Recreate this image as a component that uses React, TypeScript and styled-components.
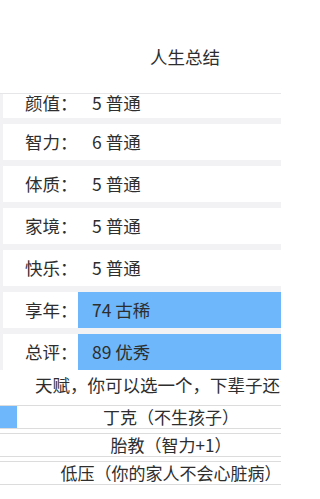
import React from "react";
import styled, { createGlobalStyle } from "styled-components";

const Global = createGlobalStyle`
  html, body {
    margin: 0;
    padding: 0;
    background: #ffffff;
    overflow: hidden;
  }
  body {
    font-family: "Noto Sans CJK SC", "Noto Sans", sans-serif;
    color: #2e2e2e;
  }
`;

const Viewport = styled.div`
  width: 281px;
  height: 499px;
  overflow: hidden;
`;

const Page = styled.div`
  width: 370px;
  display: flex;
  flex-direction: column;
`;

const Header = styled.div`
  height: 93px;
  display: flex;
  align-items: flex-start;
  justify-content: center;
  padding-top: 46px;
  box-sizing: border-box;
  font-size: 17.5px;
  line-height: 22px;
`;

const Stats = styled.div`
  display: flex;
  flex-direction: column;
  gap: 6px;
  padding: 0 0 0 3px;
  background: #f2f2f4;
  border-top: 1px solid #e6e6e8;
`;

const Row = styled.div<{ $clipped?: boolean }>`
  height: ${(p) => (p.$clipped ? "24px" : "36px")};
  display: grid;
  grid-template-columns: 75px 1fr;
  align-items: ${(p) => (p.$clipped ? "start" : "stretch")};
  background: #ffffff;
  font-size: 17.5px;
  line-height: 18px;
`;

const Label = styled.div`
  padding-left: 22px;
  display: flex;
  align-items: center;
`;

const Value = styled.div<{ $hi?: boolean }>`
  padding-left: 14px;
  display: flex;
  align-items: center;
  background: ${(p) => (p.$hi ? "#6db7fa" : "transparent")};
`;

const Prompt = styled.div`
  padding: 4px 0 0 35px;
  height: 35px;
  box-sizing: border-box;
  font-size: 17.5px;
  line-height: 22px;
  white-space: nowrap;
`;

const Choices = styled.div`
  width: 342px;
  display: flex;
  flex-direction: column;
  gap: 4px;
`;

const Choice = styled.div`
  height: 24px;
  box-sizing: border-box;
  border-top: 1px solid #dcdcdc;
  border-bottom: 1px solid #dcdcdc;
  display: grid;
  grid-template-columns: 17px 1fr 17px;
  font-size: 17px;
  line-height: 22px;
  white-space: nowrap;
`;

const Mark = styled.div<{ $on?: boolean }>`
  background: ${(p) => (p.$on ? "#6db7fa" : "transparent")};
`;

const ChoiceText = styled.div`
  text-align: center;
`;

const stats = [
  { label: "颜值：", value: "5 普通", clipped: true },
  { label: "智力：", value: "6 普通" },
  { label: "体质：", value: "5 普通" },
  { label: "家境：", value: "5 普通" },
  { label: "快乐：", value: "5 普通" },
  { label: "享年：", value: "74 古稀", hi: true },
  { label: "总评：", value: "89 优秀", hi: true },
];

const choices = [
  { text: "丁克（不生孩子）", on: true },
  { text: "胎教（智力+1）" },
  { text: "低压（你的家人不会心脏病）" },
];

export default function App() {
  return (
    <Viewport>
      <Global />
      <Page>
        <Header>人生总结</Header>
        <Stats>
          {stats.map((s) => (
            <Row key={s.label} $clipped={s.clipped}>
              <Label>{s.label}</Label>
              <Value $hi={s.hi}>{s.value}</Value>
            </Row>
          ))}
        </Stats>
        <Prompt>天赋，你可以选一个，下辈子还能抽到</Prompt>
        <Choices>
          {choices.map((c) => (
            <Choice key={c.text}>
              <Mark $on={c.on} />
              <ChoiceText>{c.text}</ChoiceText>
              <Mark />
            </Choice>
          ))}
        </Choices>
      </Page>
    </Viewport>
  );
}
